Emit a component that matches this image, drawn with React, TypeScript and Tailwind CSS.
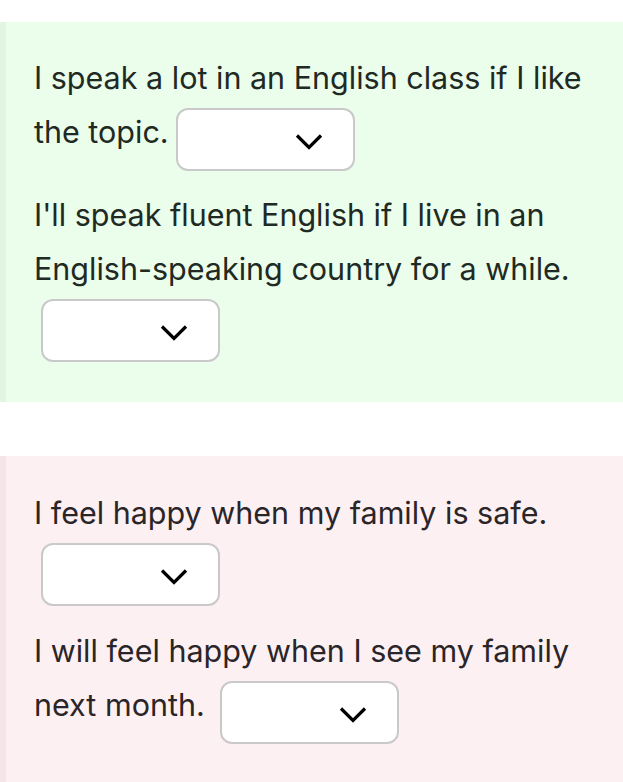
import React from 'react';

function Dropdown() {
  return (
    <span className="inline-block align-[-28px] ml-[7px] w-[179px] h-[63px] rounded-[12px] border-2 border-[#c9c9c9] bg-white relative">
      <svg
        className="absolute right-[30px] top-[23px]"
        width="28"
        height="17"
        viewBox="0 0 28 17"
        fill="none"
      >
        <path d="M2 2.5 L14 14.5 L26 2.5" stroke="#000" strokeWidth="3.2" />
      </svg>
    </span>
  );
}

export default function App() {
  return (
    <div className="bg-white pt-[22px] min-h-[782px] font-['Inter',sans-serif] text-[30.5px] leading-[54px]">
      {/* correct answers */}
      <div className="bg-[#ebfdeb] border-l-[6px] border-[#e1f5e1] pl-[28px] pr-[33px] pt-[29px] pb-[40px] text-[#1e2a23]">
        <p className="mb-[17px]">
          I speak a lot in an English class if I like the topic.<Dropdown />
        </p>
        <p>
          I'll speak fluent English if I live in an English-speaking country for a while. <Dropdown />
        </p>
      </div>

      {/* wrong answers */}
      <div className="mt-[54px] bg-[#fdf0f2] border-l-[6px] border-[#f6e5e8] pl-[28px] pr-[33px] pt-[30px] pb-[40px] text-[#2a2528]">
        <p className="mb-[18px]">
          I feel happy when my family is safe. <Dropdown />
        </p>
        <p>
          I will feel happy when I see my family next month. <Dropdown />
        </p>
      </div>
    </div>
  );
}
